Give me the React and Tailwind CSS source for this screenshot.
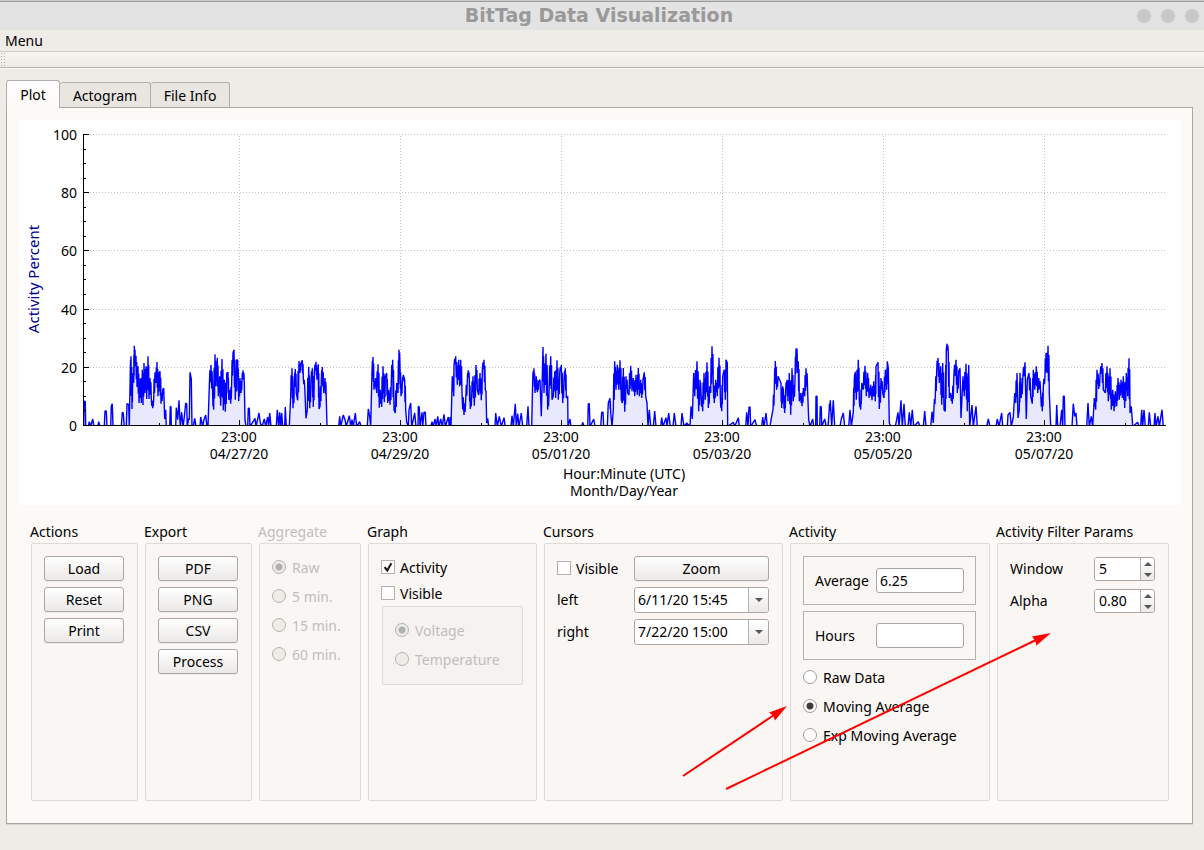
import React from "react";

/* Activity trace. Each run holds x,y pairs in thirds of a chart unit, counted from the run's own left edge; 286 is zero activity. */
const RUNS = [
  {
    offset: 0,
    points:
      "251,286 252,214 256,216 257,286 265,286 268,276 272,284 278,268 282,284 293,286 296,276 300,284 313,286 315,244 319,244 321,286 332,286 334,228 337,222 339,284 364,286 367,248 370,250 373,286 379,286 381,222 386,224 388,286 391,124 393,80 396,238 398,130 401,160 403,48 406,110 408,78 411,172 414,110 417,220 421,146 424,220 427,120 429,226 432,100 435,190 438,110 440,208 444,80 447,208 450,145 454,208 458,236 461,205 465,128 468,160 471,97 474,200 477,130 480,125 483,222 488,180 491,175 494,268 497,240 499,286 509,286 511,230 513,232 514,286 527,286 529,234 533,270 537,212 541,284 545,248 549,284 553,262 557,220 560,222 562,284 566,266 568,270 570,128 574,148 576,286 580,286 584,266 588,284 600,286 602,262 608,284 612,270 617,256 621,284 624,286 628,170 633,106 638,200 641,240 645,74 648,170 652,84 655,200 659,140 662,228 666,88 670,242 673,150 676,246 680,130 684,128 686,210 689,180 692,222 695,155 699,70 702,60 706,210 710,90 713,92 716,214 720,145 723,190 726,150 729,122 733,160 735,270 738,286 743,286 745,236 748,236 750,286 765,266 768,284 777,250 781,280 786,284 793,268 797,284 803,262 806,284 809,250 813,284 829,284 832,240 836,284 839,248 842,286 845,250 848,284 854,284 856,232 859,286 868,286 872,200 876,116 879,236 883,160 886,118 889,190 893,212 897,94 900,130 903,100 907,92 910,145 914,170 918,266 922,240 926,112 929,236 933,150 937,116 940,232 943,130 948,96 951,150 955,104 957,238 960,230 964,150 967,112 971,190 975,145 979,210 981,283 992,283 1016,286 1019,260 1022,284 1030,256 1035,270 1039,286 1048,258 1052,284 1056,270 1060,284 1066,250 1070,286 1079,276 1083,286 1102,286 1105,238 1109,260 1112,286 1116,126 1119,82 1122,180 1127,145 1130,190 1134,104 1138,234 1141,180 1145,232 1149,110 1153,218 1156,140 1160,130 1163,220 1166,180 1170,225 1174,155 1178,90 1182,240 1186,250 1190,160 1194,190",
  },
  {
    offset: 1140,
    points:
      "57,60 60,110 63,200 67,160 70,136 74,150 77,240 80,278 85,286 87,240 92,220 95,286 104,250 108,284 114,284 115,230 118,232 120,284 126,248 128,284 132,248 136,248 138,284 152,286 156,276 160,284 165,268 169,284 173,260 177,284 182,268 187,284 192,254 196,284 205,262 208,284 211,262 213,286 217,140 221,200 222,110 227,80 232,165 236,90 239,170 242,90 246,190 252,256 257,210 262,150 265,122 268,150 271,238 275,200 279,140 283,228 288,106 292,180 296,196 300,130 304,212 307,125 312,90 316,180 318,185 320,280 323,266 326,286 345,286 347,250 352,284 358,260 364,284 372,264 376,284 384,286 393,284 396,258 400,284 406,222 409,284 413,252 417,284 424,250 428,284 440,284 444,230 447,284 455,286 458,150 462,116 465,190 469,140 472,188 476,155 480,150 484,260 489,52 492,190 498,72 503,240 507,190 512,80 516,210 520,200 524,125 527,205 531,92 535,210 539,130 544,106 548,220 552,150 556,116 559,205 563,200 564,284 570,268 573,284 605,286 608,278 612,286 623,286 625,222 628,222 630,284 641,268 645,286 662,284 665,248 669,248 671,286 682,284 685,220 690,206 692,250 696,286 700,240 704,95 708,180 712,105 716,180 720,92 724,210 727,220 730,115 734,246 738,140 743,190 747,196 752,108 756,185 760,145 764,200 768,135 772,195 775,115 778,200 782,150 785,205 789,150 793,128 797,200 801,220 804,284 808,240 812,284 820,284 824,244 828,286 842,284 845,264 849,284 858,264 861,284 866,250 871,284 879,284 883,250 888,284 903,284 906,250 912,284 920,280 930,284 933,230 937,268 941,130 944,200 951,95 956,245 960,150 963,190 968,245 972,130 976,210 981,98 985,235 989,170 992,190 996,50 1000,165 1003,220 1007,150 1012,200 1017,84 1021,200 1025,245 1028,140 1033,120 1036,210 1038,90 1042,100 1043,284 1060,278 1064,284 1075,264 1078,286 1097,284 1100,248 1104,284 1107,232 1110,232 1112,284 1125,270 1130,284 1145,284 1148,262 1152,284 1158,250 1162,284 1170,284 1174,266 1177,250 1179,240 1183,180 1186,94 1190,180 1194,140",
  },
  {
    offset: 2340,
    points:
      "3,160 5,235 8,170 11,200 14,250 17,180 21,150 24,215 28,130 32,255 36,116 40,215 45,150 48,58 51,58 52,130 55,95 58,215 62,190 66,230 70,175 74,200 78,116 83,190 86,270 90,286 98,268 101,286 107,286 108,200 111,200 112,286 119,286 121,230 124,232 125,284 134,268 139,284 144,284 147,250 151,212 155,284 160,212 164,284 180,286 184,268 190,250 194,284 206,284 210,240 214,284 220,248 223,150 226,126 229,210 235,90 238,210 242,240 245,160 250,180 255,108 259,200 263,130 267,205 272,165 276,212 281,155 286,215 288,110 294,98 298,238 303,145 308,190 312,205 316,120 320,180 322,95 325,115 328,280 333,284 346,284 350,270 354,248 357,284 363,212 367,284 372,222 376,284 384,284 388,248 392,284 397,240 401,284 415,276 420,284 430,284 434,244 438,284 452,284 456,246 460,280 462,230 466,200 470,120 474,85 478,160 482,110 485,225 488,100 492,240 496,245 499,60 501,42 505,70 508,205 512,190 517,222 521,150 528,90 532,190 536,125 540,116 543,265 549,140 553,200 558,102 562,245 566,106 569,284 576,226 580,284 588,230 592,284 598,286 620,284 625,268 630,284 648,284 652,268 657,284 665,250 668,284 682,284 684,256 690,248 694,284 700,262 704,190 707,220 711,130 714,265 718,240 720,130 724,205 728,150 735,98 739,268 742,150 747,130 752,200 757,222 760,120 764,180 769,110 773,190 776,145 782,190 787,245 790,170 795,140 798,70 801,130 804,48 808,190 812,284 828,284 830,226 833,284 840,284 845,240 848,284 850,200 853,200 855,284 876,284 880,222 884,260 888,250 891,286 920,284 924,220 928,284 934,260 938,284 943,205 947,240 951,120 956,178 960,140 966,100 970,180 976,190 981,110 985,215 990,116 994,240 998,180 1002,245 1006,185 1010,230 1014,145 1018,210 1023,150 1027,205 1030,140 1034,235 1039,130 1043,200 1047,86 1050,250 1054,230 1058,284 1073,278 1077,286 1082,284 1085,240 1088,284 1092,240 1096,284 1105,284 1108,248 1112,284 1122,284 1125,250 1128,284 1134,260 1138,284 1146,240 1150,284",
  },
];

const SAMPLES = RUNS.flatMap(({ offset, points }) =>
  points.split(" ").map((pair) => {
    const [x, y] = pair.split(",").map(Number);
    return [(x + offset) / 3 - 19, y >= 283 ? 306.5 : (y - 286) / 3 + 305];
  }),
);

/* Active periods swing back and forth between neighbouring samples. */
const DENSE = SAMPLES.flatMap(([x, y], i) => {
  const next = SAMPLES[i + 1];
  if (!next || y > 296 || next[1] > 296 || Math.abs(next[1] - y) < 8) return [[x, y]];
  const dx = next[0] - x;
  const dy = next[1] - y;
  return [
    [x, y],
    [x + dx * 0.35, y + dy * 0.75],
    [x + dx * 0.65, y + dy * 0.2],
  ];
});
const TRACE = DENSE.map(([x, y]) => `${x.toFixed(1)},${y.toFixed(1)}`).join(" ");

const X_TICKS = [
  [220, "04/27/20"],
  [381, "04/29/20"],
  [542, "05/01/20"],
  [703, "05/03/20"],
  [864, "05/05/20"],
  [1025, "05/07/20"],
];
const Y_TICKS = [
  [306, "0"],
  [248, "20"],
  [190, "40"],
  [131, "60"],
  [73, "80"],
  [15, "100"],
];
const MINOR_Y = [291, 277, 262, 233, 219, 204, 175, 160, 146, 117, 102, 88, 59, 44, 30];

function Chart() {
  return (
    <svg viewBox="0 0 1162 385" className="block h-auto w-full bg-white" role="img" aria-label="Activity percent over time">
      <clipPath id="plot-area">
        <rect x="64" y="14" width="1084" height="292" />
      </clipPath>
      <g stroke="#c0c0c0" strokeDasharray="1 2" shapeRendering="crispEdges">
        {Y_TICKS.slice(1).map(([y]) => (
          <line key={y} x1="65" x2="1146" y1={y - 0.5} y2={y - 0.5} />
        ))}
        {X_TICKS.map(([x]) => (
          <line key={x} x1={x + 0.5} x2={x + 0.5} y1="16" y2="305" />
        ))}
      </g>
      <g clipPath="url(#plot-area)">
        <polygon points={`65,306.5 ${TRACE} 1147,306.5`} fill="#e8e8ff" />
        <polyline points={TRACE} fill="none" stroke="#0000ff" strokeWidth="1.4" strokeLinejoin="bevel" />
      </g>
      <g stroke="#000" shapeRendering="crispEdges">
        <line x1="64.5" x2="64.5" y1="14" y2="306" />
        <line x1="64" x2="1147" y1="305.5" y2="305.5" />
        {Y_TICKS.map(([y]) => (
          <line key={y} x1="64" x2="70" y1={y - 0.5} y2={y - 0.5} />
        ))}
        {MINOR_Y.map((y) => (
          <line key={y} x1="64" x2="67" y1={y - 0.5} y2={y - 0.5} />
        ))}
        {X_TICKS.map(([x]) => (
          <line key={x} x1={x + 0.5} x2={x + 0.5} y1="300" y2="306" />
        ))}
        {X_TICKS.map(([x]) => (
          <line key={x} x1={x - 79.5} x2={x - 79.5} y1="303" y2="306" />
        ))}
        <line x1="1106.5" x2="1106.5" y1="303" y2="306" />
      </g>
      <g fontSize="14" fill="#000">
        {Y_TICKS.map(([y, label]) => (
          <text key={label} x="58" y={y + 5} textAnchor="end">
            {label}
          </text>
        ))}
        {X_TICKS.map(([x, label]) => (
          <g key={label} textAnchor="middle">
            <text x={x} y="322">
              23:00
            </text>
            <text x={x} y="339">
              {label}
            </text>
          </g>
        ))}
        <g textAnchor="middle">
          <text x="605" y="359">
            Hour:Minute (UTC)
          </text>
          <text x="605" y="376">
            Month/Day/Year
          </text>
          <text transform="translate(20 159) rotate(-90)" fontSize="15" fill="#00008b">
            Activity Percent
          </text>
        </g>
      </g>
    </svg>
  );
}

function Group({ title, disabled, children }) {
  return (
    <fieldset disabled={disabled} className="flex min-w-0 flex-col">
      <legend className={`h-[23px] -translate-x-px whitespace-nowrap leading-6 ${disabled ? "text-[#bebebe]" : ""}`}>{title}</legend>
      <div className="h-[258px] rounded-xs border border-[#dedad7] bg-[#faf6f3] p-3 pr-[13px]">{children}</div>
    </fieldset>
  );
}

function PushButton({ children }) {
  return (
    <button
      type="button"
      className="h-[25px] w-full rounded-[3px] border border-[#a9a6a3] bg-linear-to-b from-white to-[#ebe9e7] text-center leading-5 shadow-[0_1px_0_#efebe8]"
    >
      {children}
    </button>
  );
}

function Radio({ name, label, checked, disabled }) {
  return (
    <label className={`flex h-6 items-center gap-1.5 whitespace-nowrap ${disabled ? "text-[#bebebe]" : ""}`}>
      <input
        type="radio"
        name={name}
        defaultChecked={checked}
        disabled={disabled}
        className="mb-0.5 size-3.5 shrink-0 appearance-none rounded-full border border-[#a09d9a] bg-white checked:bg-[radial-gradient(circle,#3c3c3c_3px,transparent_4px)] disabled:border-[#b4b1ae] disabled:bg-[#efebe7] disabled:checked:bg-[radial-gradient(circle,#b0b0b0_3px,transparent_4px)]"
      />
      {label}
    </label>
  );
}

function Check({ label, checked }) {
  return (
    <label className="flex h-6 items-center gap-[5px] whitespace-nowrap">
      <span className="relative mb-0.5 size-3.5 shrink-0">
        <input
          type="checkbox"
          defaultChecked={checked}
          className="peer block size-3.5 appearance-none border border-[#b4b1ae] bg-white"
        />
        <svg viewBox="0 0 14 14" className="pointer-events-none absolute inset-0 hidden size-3.5 peer-checked:block">
          <path d="M3.6 7.2 L6.2 10.4 L10.4 3.2" fill="none" stroke="#111" strokeWidth="2" />
        </svg>
      </span>
      {label}
    </label>
  );
}

function DateSelect({ id, value }) {
  return (
    <div className="relative flex h-[26px]">
      <select
        id={id}
        defaultValue={value}
        className="w-full appearance-none rounded-[3px] border border-[#a9a6a3] bg-white pl-[3px] leading-5"
      >
        <option>{value}</option>
      </select>
      <span className="pointer-events-none absolute inset-y-px right-px flex w-5 items-center justify-center rounded-r-xs border-l border-[#b4b1ae] bg-linear-to-b from-white to-[#ebe9e7]">
        <svg viewBox="0 0 8 4" className="h-1 w-2">
          <path d="M0 0h8L4 4z" fill="#555" />
        </svg>
      </span>
    </div>
  );
}

function Spin({ id, label, value, step }) {
  return (
    <div className="flex items-center justify-between">
      <label htmlFor={id}>{label}</label>
      <div className="flex h-6 w-[61px] overflow-hidden rounded-[3px] border border-[#a9a6a3] bg-white">
        <input
          id={id}
          type="number"
          step={step}
          defaultValue={value}
          className="w-0 min-w-0 flex-1 bg-white pl-1 leading-5 outline-none [appearance:textfield] [&::-webkit-inner-spin-button]:appearance-none"
        />
        <div className="flex w-3.5 flex-col border-l border-[#b4b1ae] bg-linear-to-b from-white to-[#ebe9e7]">
          <button type="button" aria-label={`Increase ${label}`} className="flex flex-1 items-center justify-center">
            <svg viewBox="0 0 8 4" className="h-1 w-2">
              <path d="M0 4h8L4 0z" fill="#555" />
            </svg>
          </button>
          <button type="button" aria-label={`Decrease ${label}`} className="flex flex-1 items-center justify-center">
            <svg viewBox="0 0 8 4" className="h-1 w-2">
              <path d="M0 0h8L4 4z" fill="#555" />
            </svg>
          </button>
        </div>
      </div>
    </div>
  );
}

function Readout({ id, label, value }) {
  return (
    <div className="flex h-[49px] items-center justify-between border border-[#b4b1ae] px-[11px]">
      <label htmlFor={id}>{label}</label>
      <input
        id={id}
        type="text"
        defaultValue={value}
        className="h-[25px] w-[88px] rounded-[3px] border border-[#a9a6a3] bg-white pl-[3px] leading-5"
      />
    </div>
  );
}

function Arrows() {
  return (
    <svg viewBox="0 0 1138 281" className="pointer-events-none absolute inset-0 size-full" aria-hidden="true">
      <g stroke="#ff0000" strokeWidth="2" fill="none">
        <path d="M652 256 L743 195" />
        <path d="M695 269 L1005 120" />
      </g>
      <g fill="#ff0000">
        <path d="M756 186 L738 192.500 L742 195.500 L744 200.500 Z" />
        <path d="M1020 113 L1001 116.500 L1004 120.500 L1005.500 125.500 Z" />
      </g>
    </svg>
  );
}

const tabBase = "rounded-t-[3px] border border-b-0 border-[#b0adaa] leading-5";

export default function App() {
  return (
    <div className="flex min-h-screen flex-col bg-[#efebe6] font-['Noto_Sans','Open_Sans',sans-serif] text-[14px] leading-5 text-black">
      <header className="relative flex h-[30px] items-start justify-center border-t border-[#cccccc] bg-[#e3e3e3] pr-1.5 shadow-[inset_0_1px_0_#999]">
        <h1 className="font-['DejaVu_Sans',sans-serif] text-[19px] font-bold leading-7 text-[#999]">BitTag Data Visualization</h1>
        <div className="absolute inset-y-0 right-[5px] flex items-center gap-2.5">
          <button type="button" aria-label="Minimize" className="size-3.5 rounded-full bg-[#c8c8c8]" />
          <button type="button" aria-label="Maximize" className="size-3.5 rounded-full bg-[#c8c8c8]" />
          <button type="button" aria-label="Close" className="size-3.5 rounded-full bg-[#c8c8c8]" />
        </div>
      </header>
      <nav className="flex h-[22px] items-center border-b border-[#cfccc9] px-[5px]">
        <button type="button">Menu</button>
      </nav>
      <div className="h-4 border-b border-[#b4b1ae] bg-linear-to-b from-[#f8f5f1] to-[#eeeae5] shadow-[0_1px_0_#faf8f5]">
        <div className="h-full w-1.5 bg-[radial-gradient(#aaa7a4_35%,transparent_45%)] bg-size-[3px_3px]" />
      </div>

      <main className="flex flex-1 flex-col px-1.5 pt-3 pr-[11px] pb-[26px]">
        <div role="tablist" className="z-10 flex h-[27px] items-end">
          <button type="button" role="tab" aria-selected="true" className={`${tabBase} -mb-px h-7 w-[54px] bg-linear-to-b from-white to-[#fdf9f6]`}>
            Plot
          </button>
          <button type="button" role="tab" aria-selected="false" className={`${tabBase} h-[25px] w-[91px] border-l-0 bg-[#e9e5e1] pt-px`}>
            Actogram
          </button>
          <button type="button" role="tab" aria-selected="false" className={`${tabBase} h-[25px] w-[79px] border-l-0 bg-[#e9e5e1] pt-px`}>
            File Info
          </button>
        </div>
        <section className="flex-1 border border-[#a9a6a3] bg-[#fdf9f6] px-3 pt-3 pb-[22px] pr-[11px] shadow-[0_1px_0_#d8d4d0]">
          <Chart />
          <div className="relative mr-3 ml-3 mt-[15px] grid grid-cols-[107fr_107fr_102fr_169fr_239fr_200fr_172fr] gap-[7px]">
            <Group title="Actions">
              <div className="flex flex-col gap-1.5">
                <PushButton>Load</PushButton>
                <PushButton>Reset</PushButton>
                <PushButton>Print</PushButton>
              </div>
            </Group>
            <Group title="Export">
              <div className="flex flex-col gap-1.5">
                <PushButton>PDF</PushButton>
                <PushButton>PNG</PushButton>
                <PushButton>CSV</PushButton>
                <PushButton>Process</PushButton>
              </div>
            </Group>
            <Group title="Aggregate" disabled>
              <div className="flex flex-col gap-[5px]">
                <Radio name="aggregate" label="Raw" checked disabled />
                <Radio name="aggregate" label="5 min." disabled />
                <Radio name="aggregate" label="15 min." disabled />
                <Radio name="aggregate" label="60 min." disabled />
              </div>
            </Group>
            <Group title="Graph">
              <div className="flex flex-col gap-0.5">
                <Check label="Activity" checked />
                <Check label="Visible" />
              </div>
              <div className="ml-px flex h-[79px] flex-col gap-[5px] rounded-xs border border-[#dedad7] bg-[#f6f2ef] p-3">
                <Radio name="sensor" label="Voltage" checked disabled />
                <Radio name="sensor" label="Temperature" disabled />
              </div>
            </Group>
            <Group title="Cursors">
              <div className="grid grid-cols-[1fr_135px] items-center gap-x-3 gap-y-1.5">
                <Check label="Visible" />
                <PushButton>Zoom</PushButton>
                <label htmlFor="cursor-left">left</label>
                <DateSelect id="cursor-left" value="6/11/20 15:45" />
                <label htmlFor="cursor-right">right</label>
                <DateSelect id="cursor-right" value="7/22/20 15:00" />
              </div>
            </Group>
            <Group title="Activity">
              <div className="flex flex-col gap-1.5">
                <Readout id="average" label="Average" value="6.25" />
                <Readout id="hours" label="Hours" value="" />
                <div className="flex flex-col gap-[5px]">
                  <Radio name="filter" label="Raw Data" />
                  <Radio name="filter" label="Moving Average" checked />
                  <Radio name="filter" label="Exp Moving Average" />
                </div>
              </div>
            </Group>
            <Group title="Activity Filter Params">
              <div className="flex flex-col gap-2 pt-px">
                <Spin id="window" label="Window" value="5" step="1" />
                <Spin id="alpha" label="Alpha" value="0.80" step="0.05" />
              </div>
            </Group>
            <Arrows />
          </div>
        </section>
      </main>
    </div>
  );
}
